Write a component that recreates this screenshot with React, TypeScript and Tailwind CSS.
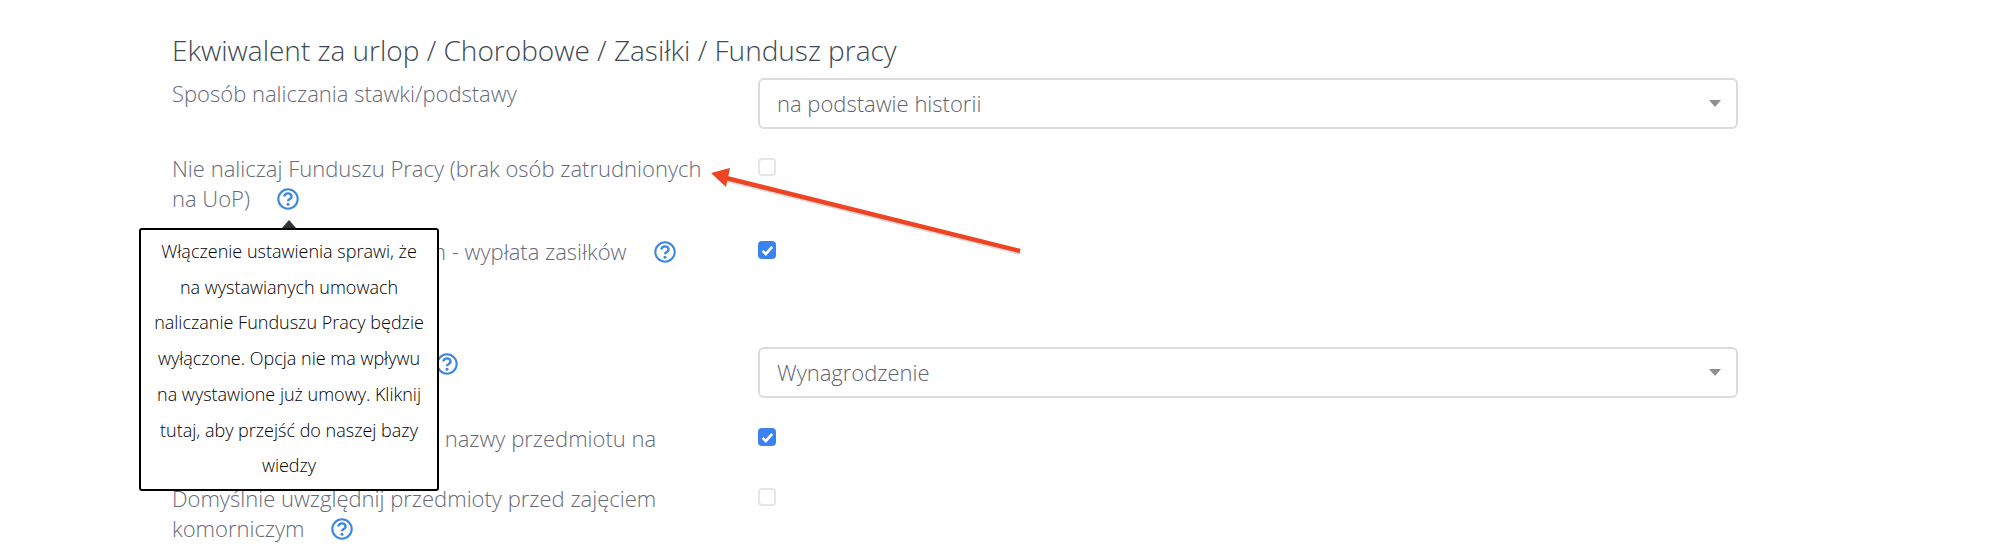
import { ReactNode } from 'react'

function Help() {
  return (
    <svg width="22" height="22" viewBox="0 0 22 22" className="inline-block align-[-3px]" fill="none">
      <circle cx="11" cy="11" r="9.7" stroke="#3b86e6" strokeWidth="2.1" />
      <path d="M7.4 8.6c0-2.1 1.7-3.2 3.6-3.2s3.6 1.2 3.6 3c0 2.6-3.6 2.5-3.6 4.8" stroke="#3b86e6" strokeWidth="2.4" fill="none" />
      <circle cx="11" cy="16.2" r="1.5" fill="#3b86e6" />
    </svg>
  )
}

function Select({ value }: { value: string }) {
  return (
    <div className="flex h-[51px] w-[980px] items-center justify-between rounded-[6px] border-2 border-[#dcdcdc] bg-white pl-[17px] pr-[15px] text-[22px] text-[#5f6371]">
      <span>{value}</span>
      <span className="h-0 w-0 border-x-[6px] border-t-[7px] border-x-transparent border-t-[#8f8f8f]" />
    </div>
  )
}

function Check({ on }: { on?: boolean }) {
  if (on) {
    return (
      <span className="flex h-[18px] w-[18px] items-center justify-center rounded-[4px] bg-[#3b82f0]">
        <svg width="13" height="11" viewBox="0 0 13 11" fill="none">
          <path d="M1.6 5.8l3.2 3.2 6.4-7.2" stroke="#fff" strokeWidth="2.6" />
        </svg>
      </span>
    )
  }
  return <span className="block h-[18px] w-[18px] rounded-[4px] border-2 border-[#e6e6e6] bg-white" />
}

function Row({ label, control, className }: { label: ReactNode; control: ReactNode; className: string }) {
  return (
    <div className={`grid grid-cols-[586px_980px] ${className}`}>
      <div className="w-[540px] text-[22px] leading-[30px] text-[#666a78]">{label}</div>
      <div>{control}</div>
    </div>
  )
}

export default function App() {
  return (
    <div className="relative h-[556px] w-[1998px] overflow-hidden bg-white pl-[172px] pt-[31px] font-['Open_Sans',sans-serif] font-light">
      <h2 className="text-[28px] leading-[38px] text-[#3d4852]">Ekwiwalent za urlop / Chorobowe / Zasiłki / Fundusz pracy</h2>

      <Row className="mt-[9px] h-[75px]" label="Sposób naliczania stawki/podstawy" control={<Select value="na podstawie historii" />} />

      <Row
        className="h-[83px]"
        label={<>Nie naliczaj Funduszu Pracy (brak osób zatrudnionych na UoP) <span className="ml-[21px]"><Help /></span></>}
        control={<div className="pt-[5px]"><Check /></div>}
      />

      <Row
        className="h-[111px]"
        label={<><span className="ml-[6px]">Rozliczenie z pracownikiem</span> - wypłata zasiłków <span className="ml-[22px]"><Help /></span></>}
        control={<div className="pt-[5px]"><Check on /></div>}
      />

      <Row
        className="h-[76px]"
        label={<div className="pt-[1px]">Domyślna nazwa umowy <span className="ml-[15px]"><Help /></span></div>}
        control={<Select value="Wynagrodzenie" />}
      />

      <Row
        className="h-[60px]"
        label="Dodaj automatycznie nr do nazwy przedmiotu na umowie"
        control={<div className="pt-[5px]"><Check on /></div>}
      />

      <Row
        className="h-[73px]"
        label={<>Domyślnie uwzględnij przedmioty przed zajęciem komorniczym <span className="ml-[21px]"><Help /></span></>}
        control={<div className="pt-[5px]"><Check /></div>}
      />

      {/* tooltip under the help icon */}
      <div className="absolute left-[139px] top-[228px] w-[300px] rounded-[3px] border-2 border-black bg-white px-[12px] pb-[5px] pt-[4px] text-center text-[18px] leading-[35.7px] text-black">
        <span className="absolute left-[141px] top-[-10px] h-0 w-0 border-x-[7px] border-b-[8px] border-x-transparent border-b-[#333]" />
        Włączenie ustawienia sprawi, że na wystawianych umowach naliczanie Funduszu Pracy będzie wyłączone. Opcja nie ma wpływu na wystawione już umowy. Kliknij tutaj, aby przejść do naszej bazy wiedzy
      </div>

      {/* annotation arrow */}
      <svg className="absolute left-[700px] top-[150px]" width="340" height="110" viewBox="0 0 340 110" fill="none">
        <path d="M320 101L26 28" stroke="#9a9a9a" strokeWidth="4" opacity="0.35" transform="translate(0 2)" />
        <path d="M320 101L26 28" stroke="#ee4423" strokeWidth="4.5" />
        <path d="M11 23L30 18L26 37Z" fill="#ee4423" />
      </svg>
    </div>
  )
}
